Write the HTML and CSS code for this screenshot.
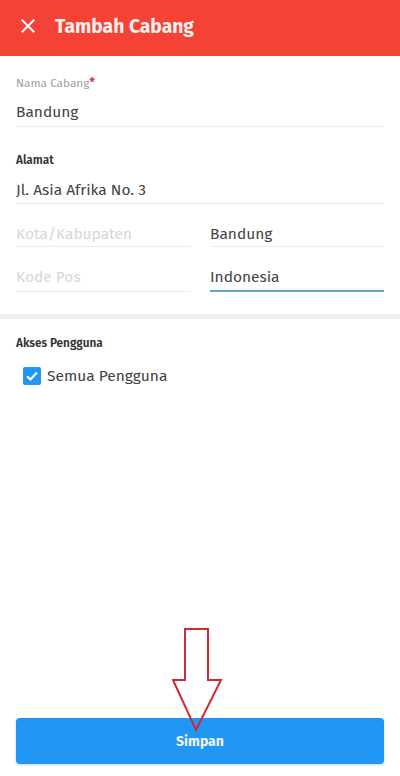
FILE: index.html
```html
<!DOCTYPE html>
<html lang="id">
<head>
<meta charset="utf-8">
<title>Tambah Cabang</title>
<link rel="stylesheet" href="styles.css">
</head>
<body>
<div class="screen">
  <header class="appbar">
    <svg class="close" width="14" height="14" viewBox="0 0 14 14"><path d="M1.5 1.5 L12.5 12.5 M12.5 1.5 L1.5 12.5" stroke="#fff" stroke-width="2" stroke-linecap="square"/></svg>
    <h1 class="title">Tambah Cabang</h1>
  </header>

  <section class="form">
    <div class="field">
      <div class="label muted">Nama Cabang<span class="req">*</span></div>
      <div class="input first">Bandung</div>
    </div>

    <div class="field alamat">
      <div class="label strong">Alamat</div>
      <div class="input second">Jl. Asia Afrika No. 3</div>
    </div>

    <div class="grid">
      <div class="input placeholder">Kota/Kabupaten</div>
      <div class="input">Bandung</div>
      <div class="input placeholder row2">Kode Pos</div>
      <div class="input focused row2">Indonesia</div>
    </div>
  </section>

  <div class="divider"></div>

  <section class="access">
    <div class="label strong">Akses Pengguna</div>
    <label class="check">
      <span class="box"><svg width="18" height="18" viewBox="0 0 18 18"><path d="M4 9.2 L7.4 12.4 L14 5.6" fill="none" stroke="#fff" stroke-width="2.2"/></svg></span>
      <span class="check-text">Semua Pengguna</span>
    </label>
  </section>

  <div class="spacer"></div>

  <footer class="footer">
    <button class="save">Simpan</button>
  </footer>

  <svg class="arrow" width="52" height="106" viewBox="0 0 52 106"><path d="M13 1 L36 1 L36 52 L49 52 L24 102 L1 52 L13 52 Z" fill="none" stroke="#cf2a35" stroke-width="2"/></svg>
</div>
</body>
</html>
```

FILE: styles.css
```css
* { box-sizing: border-box; }
html, body { margin: 0; padding: 0; background: #fff; }
body { font-family: "Fira Sans", "Noto Sans", "Open Sans", sans-serif; }

.screen {
  position: relative;
  width: 400px;
  height: 776px;
  display: flex;
  flex-direction: column;
  overflow: hidden;
}

.appbar {
  height: 56px;
  background: #f44336;
  display: flex;
  align-items: center;
  padding-left: 21px;
  flex: none;
}
.close { margin-top: -4px; }
.title {
  margin: -3px 0 0 20px;
  color: #fdf0ef;
  font-size: 19.3px;
  font-weight: 700;
}

.form { padding: 20px 16px 0; }

.label { font-size: 11.8px; line-height: 14px; }
.muted { color: #9e9e9e; }
.strong { color: #333; font-weight: 600; }
.req { color: #e53935; font-weight: 700; }

.input {
  font-size: 15.5px;
  color: #424242;
  line-height: 20px;
  border-bottom: 1px solid #ececec;
}
.first { padding: 12px 0 4px; }
.alamat { margin-top: 26px; }
.second { padding: 13px 0 3px; }

.placeholder { color: #d6d6d6; }

.grid {
  display: grid;
  grid-template-columns: 175px 174px;
  column-gap: 19px;
}
.grid .input { padding: 20px 0 2px; }
.grid .row2 { padding: 20px 0 3px; }
.grid .focused { border-bottom: 2px solid #5aa7d4; }

.divider {
  height: 5px;
  background: #eeeeee;
  margin-top: 22px;
  flex: none;
}

.access { padding: 17px 16px 0; }
.check {
  display: flex;
  align-items: center;
  margin-top: 17px;
  padding-left: 7px;
}
.box {
  width: 18px;
  height: 18px;
  border-radius: 2px;
  background: #2196f3;
  display: flex;
}
.check-text {
  margin-left: 6px;
  font-size: 15.5px;
  color: #424242;
}

.spacer { flex: 1; }

.footer { padding: 0 16px 12px; flex: none; }
.save {
  width: 100%;
  height: 46px;
  border: 0;
  border-radius: 4px;
  background: #2196f3;
  color: #eef6fe;
  font-family: inherit;
  font-size: 14px;
  font-weight: 700;
  box-shadow: 0 1px 3px rgba(0,0,0,0.18);
}

.arrow {
  position: absolute;
  left: 172px;
  top: 628px;
}
```
